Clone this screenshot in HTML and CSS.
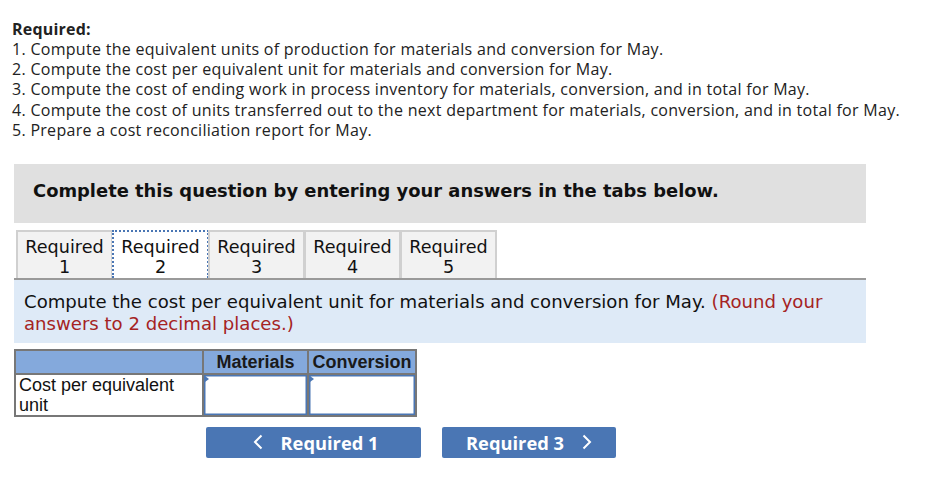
FILE: index.html
```html
<!DOCTYPE html>
<html lang="en">
<head>
    <meta charset="UTF-8">
    <title>Cost per equivalent unit</title>
    <link rel="stylesheet" href="styles.css">
</head>
<body>
    <!-- Question text -->
    <div class="required">
        <div class="required-title">Required:</div>
        <div>1. Compute the equivalent units of production for materials and conversion for May.</div>
        <div>2. Compute the cost per equivalent unit for materials and conversion for May.</div>
        <div>3. Compute the cost of ending work in process inventory for materials, conversion, and in total for May.</div>
        <div>4. Compute the cost of units transferred out to the next department for materials, conversion, and in total for May.</div>
        <div>5. Prepare a cost reconciliation report for May.</div>
    </div>

    <!-- Instruction banner -->
    <div class="banner">Complete this question by entering your answers in the tabs below.</div>

    <!-- Tabs -->
    <div class="tabs">
        <div class="tab">Required<br>1</div>
        <div class="tab active">Required<br>2</div>
        <div class="tab">Required<br>3</div>
        <div class="tab">Required<br>4</div>
        <div class="tab">Required<br>5</div>
    </div>

    <div class="prompt">
        Compute the cost per equivalent unit for materials and conversion for May. <span class="note">(Round your answers to 2 decimal places.)</span>
    </div>

    <table class="answer-table">
        <tr class="head">
            <th></th>
            <th>Materials</th>
            <th>Conversion</th>
        </tr>
        <tr>
            <td class="label">Cost per equivalent unit</td>
            <td class="input-cell"><span class="marker"></span></td>
            <td class="input-cell"><span class="marker"></span></td>
        </tr>
    </table>

    <!-- Navigation buttons -->
    <div class="nav">
        <button class="nav-btn prev">
            <svg width="10" height="16" viewBox="0 0 10 16"><path d="M8.5 1.5 L2 8 L8.5 14.5" fill="none" stroke="white" stroke-width="2"/></svg>
            Required 1
        </button>
        <button class="nav-btn next">
            Required 3
            <svg width="10" height="16" viewBox="0 0 10 16"><path d="M1.5 1.5 L8 8 L1.5 14.5" fill="none" stroke="white" stroke-width="2"/></svg>
        </button>
    </div>
</body>
</html>
```

FILE: styles.css
```css
/* General styling */
body {
    margin: 0;
    padding: 20px 0 0 12px;
    font-family: "Open Sans", Arial, sans-serif;
    color: #222;
    background: white;
}

/* Required list */
.required {
    font-size: 16px;
    line-height: 20.4px;
    letter-spacing: 0.29px;
}

.required-title {
    font-weight: bold;
    letter-spacing: 0.2px;
    line-height: 18.5px;
}

/* Gray banner */
.banner {
    margin: 23px 0 0 2px;
    width: 833px;
    height: 59px;
    padding: 0 0 6px 19px;
    box-sizing: content-box;
    background-color: #e0e0e0;
    font-family: "DejaVu Sans", Verdana, sans-serif;
    font-weight: bold;
    font-size: 17.9px;
    color: #111;
    display: flex;
    align-items: center;
    height: 53px;
}

/* Tabs */
.tabs {
    display: flex;
    margin: 7px 0 0 2px;
    width: 852px;
    border-bottom: 2px solid #9a9a9a;
    padding-left: 2px;
    box-sizing: border-box;
}

.tab {
    width: 97px;
    height: 48px;
    box-sizing: border-box;
    background: #f2f2f2;
    border: 2px solid #d0d0d0;
    border-bottom: none;
    font-family: "DejaVu Sans", Verdana, sans-serif;
    font-size: 17.6px;
    line-height: 20px;
    text-align: center;
    padding-top: 5px;
    color: #111;
    white-space: nowrap;
}

.tab + .tab {
    margin-left: -1px;
}

.tab.active {
    background: white;
    border: 2px dotted #4a76b4;
    border-bottom: none;
}

/* Prompt */
.prompt {
    margin: 0 0 0 2px;
    width: 852px;
    height: 63px;
    box-sizing: border-box;
    padding: 11px 30px 0 10px;
    background: #deeaf7;
    font-family: "DejaVu Sans", Verdana, sans-serif;
    font-size: 18.1px;
    line-height: 22px;
    color: #111;
}

.note {
    color: #a52323;
}

/* Answer table */
.answer-table {
    margin: 6px 0 0 2px;
    border-collapse: collapse;
    font-family: "Liberation Sans", Arial, sans-serif;
    font-size: 18px;
}

.answer-table th,
.answer-table td {
    border: 2px solid #777;
    padding: 0;
}

.head th {
    background: #84a9dc;
    height: 22px;
    font-weight: bold;
    color: #1a1a1a;
    text-align: center;
    line-height: 20px;
}

.head th:first-child {
    width: 186px;
}

.head th:nth-child(2) {
    width: 103px;
}

.head th:nth-child(3) {
    width: 106px;
}

.label {
    height: 40px;
    padding: 0 3px !important;
    line-height: 20px;
    vertical-align: middle;
    color: #111;
}

.input-cell {
    position: relative;
    background: white;
    box-shadow: inset 0 0 0 1.5px #4a76b4;
}

.marker {
    position: absolute;
    top: 1px;
    left: 1px;
    width: 0;
    height: 0;
    border-top: 3px solid transparent;
    border-bottom: 3px solid transparent;
    border-left: 4px solid #4a76b4;
}

/* Navigation */
.nav {
    display: flex;
    margin: 10px 0 0 194px;
    gap: 21px;
}

.nav-btn {
    height: 31px;
    border: none;
    border-radius: 2px;
    background: #4a76b4;
    color: white;
    font-family: "Open Sans", Arial, sans-serif;
    font-weight: bold;
    font-size: 18.3px;
    display: flex;
    align-items: center;
    justify-content: center;
    gap: 18px;
    cursor: pointer;
}

.prev {
    width: 215px;
    padding-left: 10px;
}

.next {
    width: 174px;
}
```
